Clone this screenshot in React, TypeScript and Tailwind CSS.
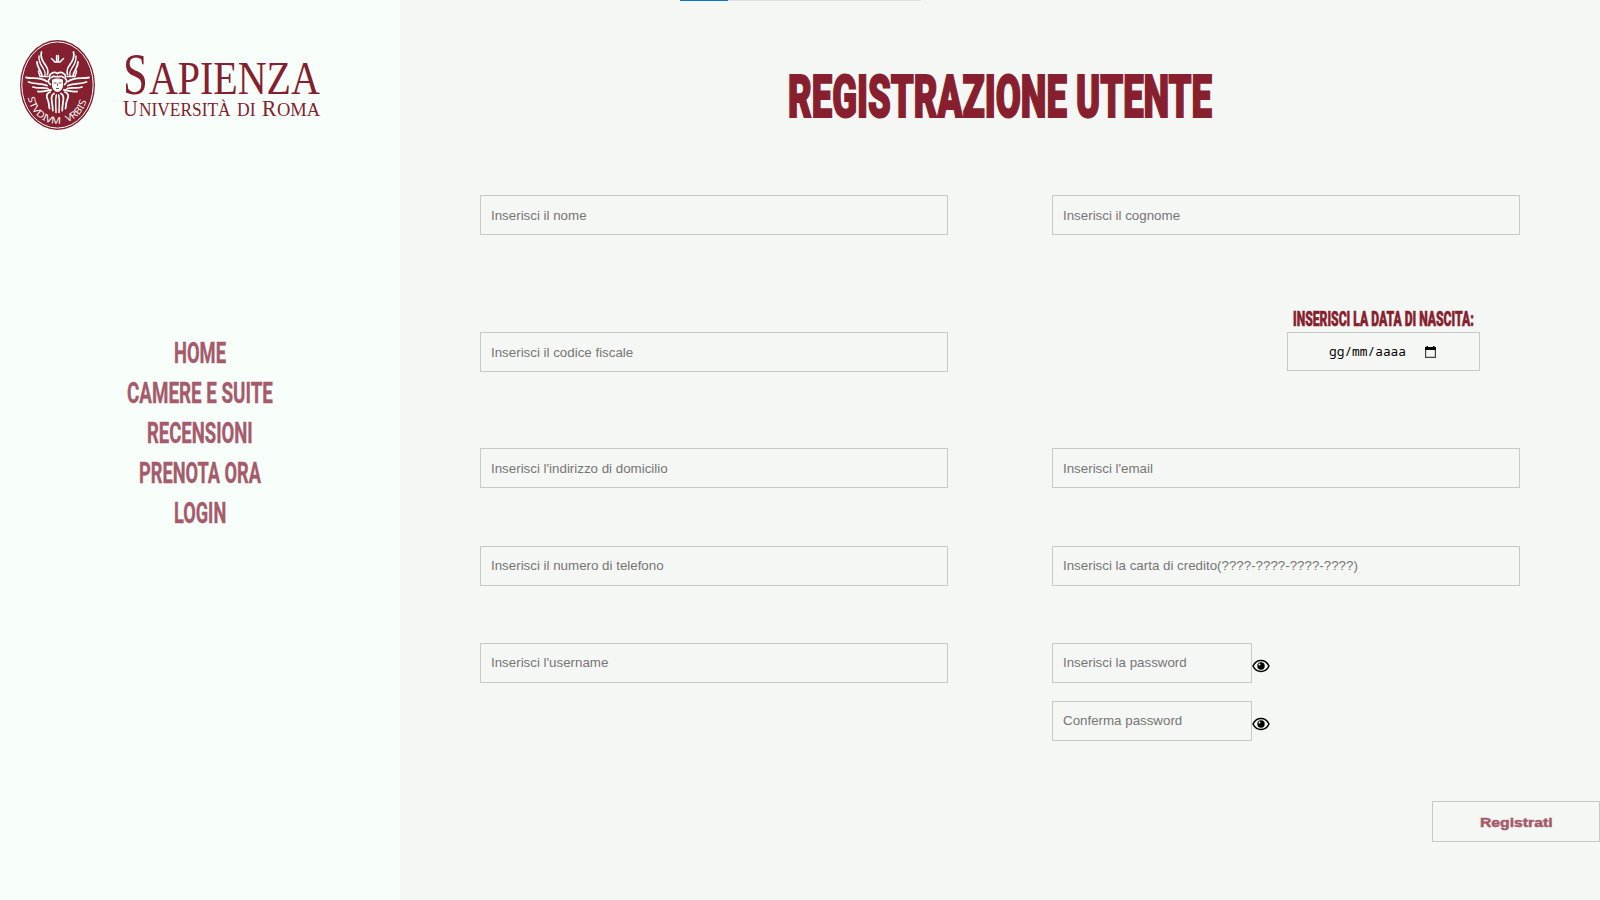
import { useLayoutEffect, useRef, useState } from 'react';

type FitProps = { text: string; width: number; className?: string };

/* Condenses a line of text horizontally to a given width. */
function FitText({ text, width, className = '' }: FitProps) {
  const ref = useRef<HTMLSpanElement>(null);
  const [scale, setScale] = useState(1);
  useLayoutEffect(() => {
    if (ref.current) setScale(width / ref.current.offsetWidth);
  }, [text, width]);
  return (
    <span className="flex shrink-0 justify-start" style={{ width }}>
      <span
        ref={ref}
        className={`inline-block shrink-0 origin-left whitespace-nowrap ${className}`}
        style={{ transform: `scaleX(${scale})` }}
      >
        {text}
      </span>
    </span>
  );
}

const links = [
  { label: 'HOME', width: 52 },
  { label: 'CAMERE E SUITE', width: 146 },
  { label: 'RECENSIONI', width: 106 },
  { label: 'PRENOTA ORA', width: 122 },
  { label: 'LOGIN', width: 52 },
];

/* Left half of the cherub's wings; the right half is its mirror image. */
function Wing() {
  return (
    <>
      <path d="M21.500 12c-1.500 5 .5 8.500 3.500 12.500 3 4 3.500 6 2.500 10" />
      <path d="M19 16c-.5 6 2 9 4 12s2.500 4 2 8" strokeWidth="1.400" />
      <path d="M17 22c0 6 4.500 9 5 14" />
      <path d="M18.500 31c0 3 1.500 3.500 1.500 5.500h8" strokeWidth="1.500" />
      <path d="M6 37.500c7 1.500 15-.5 21 4" />
      <path d="M8.500 42c6 2.500 12 .5 18.500 3.500" />
      <path d="M13 47c5 2 9 0 15 1.500" />
      <path d="M18 51.500c5 1 8-1 13-1.500" />
      <path d="M30 52c-4.500 2-3.500 5-2 8.500s.5 5 1.500 8" />
      <path d="M34 53.500c-4.500 3-1.500 7-1.200 17" />
      <path d="M36.300 55c-1.300 6-.3 10-.3 17.500" strokeWidth="1.500" />
    </>
  );
}

function Emblem() {
  return (
    <svg className="h-[90px] w-[75px] shrink-0" viewBox="0 0 75 90">
      <defs>
        <path id="motto" d="M7.800 57.500C14 92.500 61 92.500 67.200 57.500" />
      </defs>
      <ellipse cx="37.500" cy="45" rx="37.500" ry="45" fill="#84202f" />
      <ellipse cx="37.500" cy="45" rx="35.700" ry="43.100" fill="none" stroke="#f8fffb" strokeWidth="1" />
      <g fill="none" stroke="#f8fffb" strokeWidth="1.800" strokeLinecap="round" strokeLinejoin="round">
        <path d="M31.500 18.500l3.500 3.500M43.500 18.500l-3.500 3.500M36.600 15.500v6M38.400 15.500v6M34.500 22h6" strokeWidth="1.500" />
        <Wing />
        <g transform="translate(75 0) scale(-1 1)">
          <Wing />
        </g>
      </g>
      <path d="M29 42c-2-3-.5-5 .8-6 .5-4.500 5.500-5.500 7.700-3.500 2.200-2 7.200-1 7.700 3.500 1.300 1 2.800 3 .8 6l-2 4h-13z" fill="#84202f" />
      <path d="M32 40c2-2 9-2 11 0v5.500c0 3.500-3 6.500-5.500 6.500s-5.500-3-5.500-6.500z" fill="#f8fffb" />
      <path
        d="M30.500 44.500c-3.500-2.500-2-5-.7-6-1.500-5 4.200-7.500 7.700-5 3.500-2.500 9.200 0 7.700 5 1.300 1 2.800 3.500-.7 6M31.500 37.500c2.500-2.500 4.500.3 6-1.200 1.500 1.500 3.500-1.300 6 1.200"
        fill="none"
        stroke="#f8fffb"
        strokeWidth="1.700"
        strokeLinecap="round"
      />
      <path d="M33.500 43h3M38.500 43h3M36 48.500h3M37.500 43.500v2.500" stroke="#84202f" strokeWidth=".8" />
      <text fill="#f8fffb" fontFamily="'Noto Sans', sans-serif" fontSize="9.500" wordSpacing="3">
        <textPath href="#motto" textLength="83" lengthAdjust="spacingAndGlyphs">STVDIVM VRBIS</textPath>
      </text>
    </svg>
  );
}

function Logo() {
  return (
    <div className="flex h-[90px] text-[#84202f]">
      <Emblem />
      <div className="ml-[28px] mt-[11px] flex flex-col font-['Liberation_Serif',serif]">
        <div className="flex h-[46px] items-baseline gap-px">
          <FitText text="S" width={25} className="text-[59px] leading-[46px]" />
          <FitText text="APIENZA" width={171} className="text-[46px] leading-[46px]" />
        </div>
        <div className="mt-px flex h-[22px] items-baseline gap-px">
          <FitText text="U" width={15} className="text-[23px] leading-[22px]" />
          <FitText text="NIVERSITÀ" width={92} className="text-[18.500px] leading-[22px]" />
          <span className="w-[4px] shrink-0" />
          <FitText text="DI" width={19} className="text-[18.500px] leading-[22px]" />
          <span className="w-[4px] shrink-0" />
          <FitText text="R" width={14} className="text-[23px] leading-[22px]" />
          <FitText text="OMA" width={43} className="text-[18.500px] leading-[22px]" />
        </div>
      </div>
    </div>
  );
}

type FieldProps = { placeholder: string; narrow?: boolean; raised?: boolean };

function Field({ placeholder, narrow = false, raised = false }: FieldProps) {
  return (
    <input
      placeholder={placeholder}
      className={`block h-10 border border-[#c8cac8] bg-transparent px-2.5 text-[13.333px] placeholder:text-[#757575] placeholder:opacity-100 ${narrow ? 'w-[200px]' : 'w-[468px]'} ${raised ? 'pb-0.5' : ''}`}
    />
  );
}

function Eye() {
  return (
    <svg className="mt-1.5 h-3.5 w-[18px]" viewBox="0 0 18 14">
      <path d="M1 7C4.500-.4 13.500-.4 17 7 13.500 14.400 4.500 14.400 1 7z" fill="none" stroke="#000" strokeWidth="1.500" />
      <circle cx="9" cy="7" r="3.700" />
      <circle cx="7.500" cy="5.500" r="1" fill="#f5f7f4" />
    </svg>
  );
}

function CalendarIcon() {
  return (
    <svg className="h-3 w-[11px]" viewBox="0 0 11 12">
      <path d="M.6 1.600h9.800v9.800H.6z" fill="none" stroke="#444" strokeWidth="1.200" />
      <path d="M0 1h11v3H0zM1.500 0h1.500v2H1.500zM8 0h1.500v2H8z" />
    </svg>
  );
}

export default function App() {
  return (
    <div className="flex h-[900px] w-[1600px] overflow-hidden bg-[#f5f7f4] font-['Liberation_Sans',Arial,sans-serif]">
      <aside className="flex w-[400px] shrink-0 flex-col bg-[#f8fffb] pt-10">
        <div className="pl-5">
          <Logo />
        </div>
        <nav className="mt-[203px] flex flex-col items-center font-['Roboto',sans-serif] text-[30px] font-bold leading-10 text-[#a65a6b]">
          {links.map((l) => (
            <a key={l.label} className="block h-10">
              <FitText text={l.label} width={l.width} className="[-webkit-text-stroke:0.4px_#a65a6b]" />
            </a>
          ))}
        </nav>
      </aside>

      <main className="flex w-[1200px] flex-col">
        <div className="ml-[280px] flex h-px w-[241px] bg-[#e2e4e1]">
          <div className="w-12 bg-[#0078d7]" />
        </div>
        <h1 className="mt-[60px] flex h-[71px] justify-center font-['Roboto',sans-serif] text-[60px] font-black leading-[72px] text-[#871f2f]">
          <FitText text="REGISTRAZIONE UTENTE" width={424} className="[-webkit-text-stroke:2px_#871f2f]" />
        </h1>
        <form className="flex flex-col pl-20">
          <div className="mt-[63px] flex gap-[104px]">
            <Field placeholder="Inserisci il nome" />
            <Field placeholder="Inserisci il cognome" />
          </div>
          <div className="mt-[70px] flex items-end">
            <Field placeholder="Inserisci il codice fiscale" />
            <div className="ml-[339px] flex w-[193px] flex-col items-center pb-px">
              <label className="h-[27px] font-['Roboto',sans-serif] text-[20px] font-black leading-7 text-[#871f2f]">
                <FitText
                  text="INSERISCI LA DATA DI NASCITA:"
                  width={181}
                  className="[-webkit-text-stroke:0.6px_#871f2f]"
                />
              </label>
              <div className="flex h-[39px] w-[193px] items-center border border-[#c8cac8] pl-[41px]">
                <span className="w-24 font-['Noto_Sans_Mono','DejaVu_Sans_Mono',monospace] text-[12px] text-black">
                  <FitText text="gg/mm/aaaa" width={77} />
                </span>
                <CalendarIcon />
              </div>
            </div>
          </div>
          <div className="mt-[76px] flex gap-[104px]">
            <Field placeholder="Inserisci l'indirizzo di domicilio" />
            <Field placeholder="Inserisci l'email" />
          </div>
          <div className="mt-[58px] flex gap-[104px]">
            <Field raised placeholder="Inserisci il numero di telefono" />
            <Field raised placeholder="Inserisci la carta di credito(????-????-????-????)" />
          </div>
          <div className="mt-[57px] flex items-start gap-[104px]">
            <Field raised placeholder="Inserisci l'username" />
            <div className="flex flex-col gap-[18px]">
              <div className="flex items-center">
                <Field narrow raised placeholder="Inserisci la password" />
                <Eye />
              </div>
              <div className="flex items-center">
                <Field narrow raised placeholder="Conferma password" />
                <Eye />
              </div>
            </div>
          </div>
          <button
            type="button"
            className="mt-[60px] h-[41px] w-[168px] self-end border border-[#c8cac8] pt-0.5 text-[#a65a6b]"
          >
            <span className="flex justify-center text-[13.333px] font-bold">
              <FitText text="Registrati" width={72} className="[-webkit-text-stroke:0.5px_#a65a6b]" />
            </span>
          </button>
        </form>
      </main>
    </div>
  );
}
